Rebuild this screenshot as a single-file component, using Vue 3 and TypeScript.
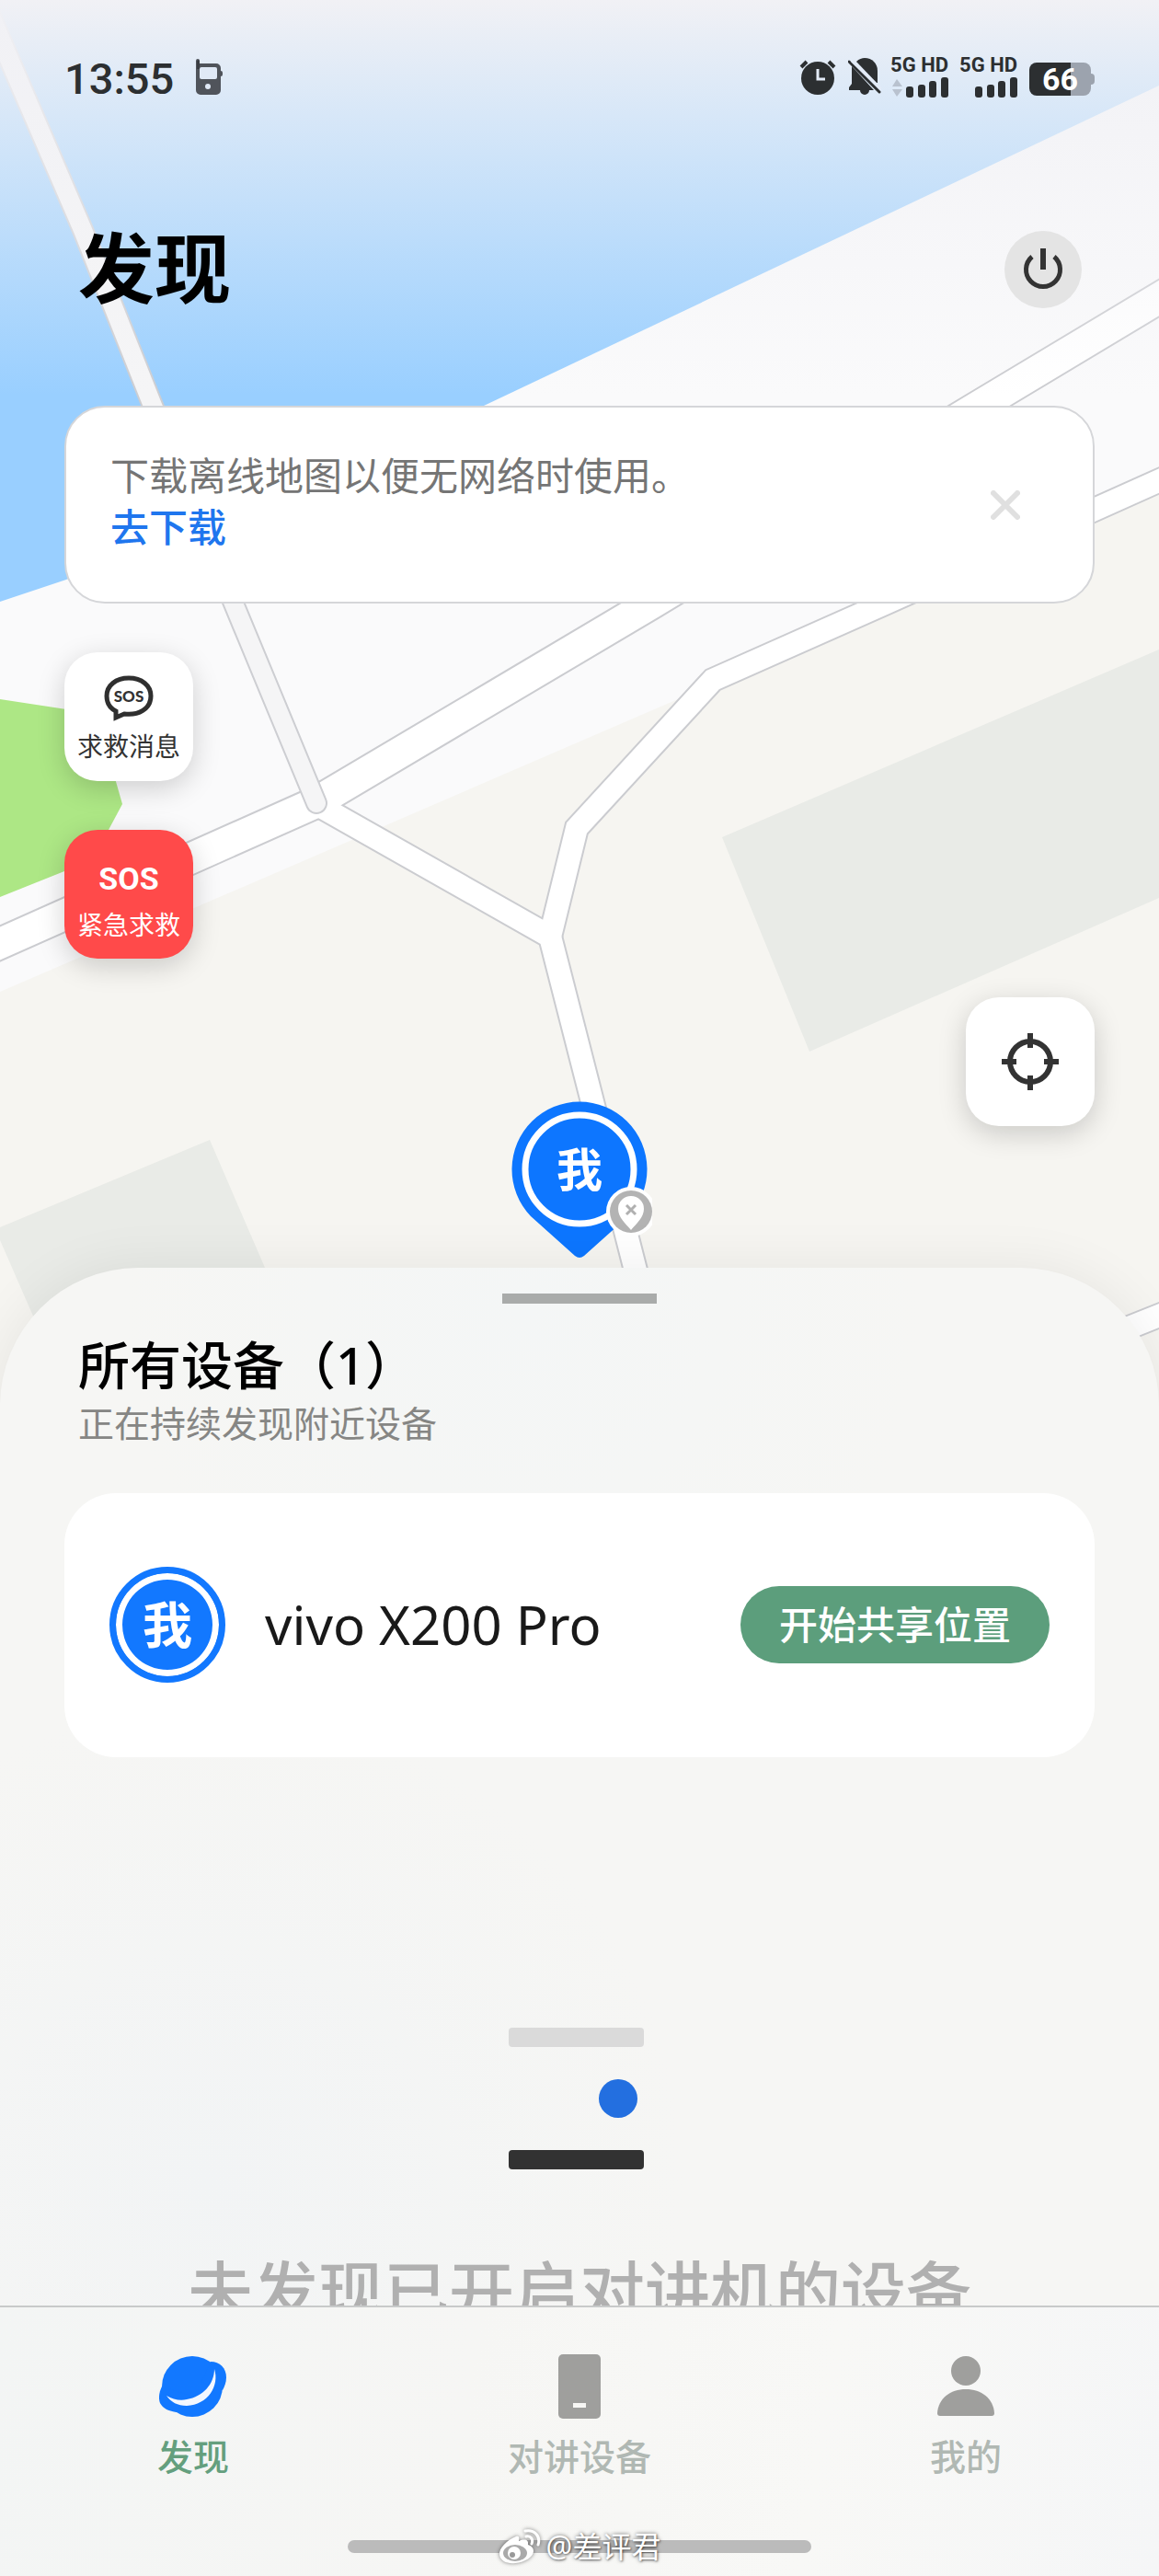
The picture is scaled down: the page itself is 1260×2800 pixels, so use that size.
<script setup lang="ts">
import { ref } from 'vue'

interface Device {
  id: number
  badge: string
  name: string
}

interface Tab {
  key: 'discover' | 'radio' | 'mine'
  label: string
}

const devices: Device[] = [{ id: 1, badge: '我', name: 'vivo X200 Pro' }]

const tabs: Tab[] = [
  { key: 'discover', label: '发现' },
  { key: 'radio', label: '对讲设备' },
  { key: 'mine', label: '我的' },
]

const active = ref<Tab['key']>('discover')
</script>

<template>
  <div class="app">
    <svg class="map" viewBox="0 0 1260 1560" preserveAspectRatio="xMidYMin slice" aria-hidden="true">
      <defs>
        <linearGradient id="haze" x1="0" y1="0" x2="0" y2="1">
          <stop offset="0" stop-color="#f1f1f5" />
          <stop offset="1" stop-color="#f1f1f5" stop-opacity="0" />
        </linearGradient>
      </defs>
      <rect width="1260" height="1560" fill="#fafafb" />
      <path d="M0 1078L760 750L962 656L1260 525V1560H0Z" fill="#f6f5f1" />
      <path d="M0 0H1260V93L526 441L72 630L0 654Z" fill="#99cfff" />
      <path d="M0 760L105 776L133 874L118 902L70 947L0 975Z" fill="#ade785" />
      <path d="M785 910L1260 706V976L880 1143Z" fill="#e9ebe7" />
      <path d="M0 1334L228 1239L330 1475L62 1490L0 1348Z" fill="#e9ebe7" />
      <g fill="none" stroke-linejoin="miter">
        <g stroke="#cbccd0">
          <path d="M-10 1030L342 873L708 656L1065 441L1270 318" stroke-width="37" />
          <path d="M342 873L598 1018L690 1377L700 1416" stroke-width="28" />
          <path d="M598 1018L627 900L775 739L962 656L1270 518" stroke-width="28" />
          <path d="M1200 1454L1270 1426" stroke-width="28" />
        </g>
        <g stroke="#ffffff">
          <path d="M-10 1030L342 873L708 656L1065 441L1270 318" stroke-width="33" />
          <path d="M342 873L598 1018L690 1377L700 1416" stroke-width="24" />
          <path d="M598 1018L627 900L775 739L962 656L1270 518" stroke-width="24" />
          <path d="M1200 1454L1270 1426" stroke-width="24" />
        </g>
        <path d="M-20 -5L9 62L90 250L166 441L254 656L344 873" stroke="#cdced2" stroke-width="24" stroke-linecap="round" />
        <path d="M-20 -5L9 62L90 250L166 441L254 656L344 873" stroke="#f5f5f6" stroke-width="20" stroke-linecap="round" />
      </g>
      <rect width="1260" height="430" fill="url(#haze)" />
    </svg>

    <section class="hero">
      <div class="status">
        <div class="status-side">
          <span class="clock">13:55</span>
          <svg class="radio-icon" width="30" height="40" viewBox="0 0 30 40" aria-hidden="true">
            <path d="M0 2a2 2 0 0 1 4 0v3h18a5 5 0 0 1 5 5v3a2 2 0 0 1 2 2v2a2 2 0 0 1-2 2v15a5 5 0 0 1-5 5H5a5 5 0 0 1-5-5Z" fill="#50545b" />
            <rect x="4" y="9" width="19" height="13" rx="2" fill="#e0e9f6" />
            <circle cx="13" cy="30" r="3" fill="#e0e9f6" />
            <path d="M1 2a2 2 0 0 1 3 0v9H1Z" fill="#3a3d42" />
          </svg>
        </div>
        <div class="status-side right">
          <svg class="alarm" width="40" height="40" viewBox="0 0 40 40" aria-hidden="true">
            <circle cx="20" cy="21" r="18" fill="#2c2f31" />
            <path d="M2 9L8 3M38 9L32 3" stroke="#2c2f31" stroke-width="4" />
            <path d="M20 11V22H28" fill="none" stroke="#e3ebf7" stroke-width="3" />
          </svg>
          <svg class="bell" width="36" height="42" viewBox="0 0 36 42" aria-hidden="true">
            <path d="M9 4C12 1 15 0 18 0C26 0 32 6 32 14V27L31 27Z" fill="#2c2f31" />
            <path d="M4 9L28 35H23A5 5 0 0 1 13 35H1V32L4 28Z" fill="#2c2f31" />
            <path d="M1 4L34 37" stroke="#2c2f31" stroke-width="3" stroke-linecap="round" />
            <path d="M4 3L36 34" stroke="#e3ebf7" stroke-width="3" />
          </svg>
          <div class="sim">
            <span>5G HD</span>
            <svg width="62" height="22" viewBox="0 0 62 22" aria-hidden="true">
              <path d="M1 10L6 2L12 10ZM1 13H12L6 21Z" fill="#b9c2cf" />
              <g fill="#2c2f31">
                <rect x="16" y="10" width="8" height="12" rx="3" />
                <rect x="29" y="8" width="8" height="14" rx="3" />
                <rect x="41" y="4" width="8" height="18" rx="3" />
                <rect x="54" y="0" width="8" height="22" rx="3" />
              </g>
            </svg>
          </div>
          <div class="sim">
            <span>5G HD</span>
            <svg width="62" height="22" viewBox="0 0 62 22" aria-hidden="true">
              <g fill="#2c2f31">
                <rect x="16" y="10" width="8" height="12" rx="3" />
                <rect x="29" y="8" width="8" height="14" rx="3" />
                <rect x="41" y="4" width="8" height="18" rx="3" />
                <rect x="54" y="0" width="8" height="22" rx="3" />
              </g>
            </svg>
          </div>
          <div class="battery"><span>66</span></div>
        </div>
      </div>

      <header class="heading">
        <h1>发现</h1>
        <button class="power" type="button" aria-label="关闭">
          <svg width="46" height="46" viewBox="0 0 46 46" aria-hidden="true">
            <path d="M11 9A18.500 18.500 0 1 0 35 9" fill="none" stroke="#333" stroke-width="5" />
            <path d="M23 0V23" stroke="#333" stroke-width="6" />
          </svg>
        </button>
      </header>

      <div class="banner">
        <p>下载离线地图以便无网络时使用。<br /><a href="#download">去下载</a></p>
        <button class="close" type="button" aria-label="关闭提示">
          <svg width="32" height="32" viewBox="0 0 32 32" aria-hidden="true">
            <path d="M3 3L29 29M29 3L3 29" stroke="#e0e0e0" stroke-width="6" stroke-linecap="round" />
          </svg>
        </button>
      </div>

      <div class="tools">
        <button class="tile" type="button">
          <span class="bubble">
            <svg width="54" height="50" viewBox="0 0 54 50" aria-hidden="true">
              <path d="M27 3C13 3 3 11 3 22.500C3 30 7 36 13 39V46L22 42C37 44 51 37 51 22.500C51 11 41 3 27 3Z" fill="none" stroke="#2f2f2f" stroke-width="5" />
            </svg>
            <b>SOS</b>
          </span>
          <span class="tile-label">求救消息</span>
        </button>
        <button class="tile danger" type="button">
          <b class="sos">SOS</b>
          <span class="tile-label">紧急求救</span>
        </button>
      </div>

      <button class="tile locate" type="button" aria-label="定位">
        <svg width="62" height="62" viewBox="0 0 62 62" aria-hidden="true">
          <circle cx="31" cy="31" r="22" fill="none" stroke="#333" stroke-width="6" />
          <path d="M31 0V16M31 46V62M0 31H16M46 31H62" stroke="#333" stroke-width="6" />
        </svg>
      </button>

      <div class="pin">
        <svg width="158" height="174" viewBox="0 0 158 174" aria-hidden="true">
          <path d="M26 126A73.500 73.500 0 1 1 132 126L84 169Q79 173 74 169Z" fill="#0d76ff" />
          <circle cx="79" cy="75" r="59" fill="none" stroke="#fff" stroke-width="7" />
          <circle cx="135" cy="121" r="27" fill="#fff" />
          <circle cx="135" cy="121" r="23" fill="#b3b3b3" />
          <path d="M135 141C129 134 121 127 121 118A14 14 0 0 1 149 118C149 127 141 134 135 141Z" fill="#fff" />
          <path d="M130 114L140 124M140 114L130 124" stroke="#b0b0b0" stroke-width="3" />
        </svg>
        <span>我</span>
      </div>
    </section>

    <main class="sheet">
      <div class="handle"></div>
      <h2>所有设备（1）</h2>
      <p class="hint">正在持续发现附近设备</p>
      <article v-for="device in devices" :key="device.id" class="device">
        <span class="avatar">{{ device.badge }}</span>
        <span class="device-name">{{ device.name }}</span>
        <button class="share" type="button">开始共享位置</button>
      </article>
      <div class="empty">
        <div class="loader">
          <i class="bar"></i>
          <i class="dot"></i>
          <i class="bar dark"></i>
        </div>
        <p>未发现已开启对讲机的设备</p>
      </div>
    </main>

    <footer class="dock">
      <nav>
        <button
          v-for="tab in tabs"
          :key="tab.key"
          type="button"
          :class="['tab', { active: tab.key === active }]"
          @click="active = tab.key"
        >
          <svg v-if="tab.key === 'discover'" width="74" height="70" viewBox="0 0 74 70" aria-hidden="true">
            <g fill="#1278ff">
              <circle cx="36" cy="35" r="33" />
              <path d="M56 8C66 8 73 15 73 25C73 31 71 35 69 39L46 30Z" />
              <path d="M3 35C0 41 -1 48 1 53C4 59 11 62 19 63L34 45Z" />
            </g>
            <path d="M60 16C66 34 53 55 30 56C20 56 13 52 8 45C15 49 23 51 30 49C48 46 60 32 60 16Z" fill="#f2f7ff" />
          </svg>
          <svg v-else-if="tab.key === 'radio'" width="74" height="70" viewBox="0 0 74 70" aria-hidden="true">
            <rect x="14" y="0" width="46" height="70" rx="5" fill="#9f9f9d" />
            <rect x="30" y="53" width="14" height="5" fill="#f7f7f5" />
          </svg>
          <svg v-else width="74" height="70" viewBox="0 0 74 70" aria-hidden="true">
            <circle cx="37" cy="18" r="16" fill="#9f9f9d" />
            <path d="M6 64C7 48 20 38 37 38C54 38 67 48 68 64Q68 67 65 67H9Q6 67 6 64Z" fill="#9f9f9d" />
          </svg>
          <span>{{ tab.label }}</span>
        </button>
      </nav>
      <div class="home-bar">
        <div class="credit">
          <svg width="46" height="38" viewBox="0 0 46 38" aria-hidden="true">
            <path d="M19 8C9 12 0 21 1 28C2 35 10 38 18 37C29 36 38 30 38 24C38 20 35 18 32 17C33 12 29 10 22 13C23 9 22 7 19 8Z" fill="#fff" />
            <ellipse cx="18" cy="26" rx="13" ry="9" fill="#aaa" />
            <circle cx="17" cy="26" r="7" fill="#fff" />
            <circle cx="15" cy="28" r="3" fill="#999" />
            <path d="M30 8C35 7 38 11 36 16M29 2C39 0 46 8 43 17" fill="none" stroke="#fff" stroke-width="3" stroke-linecap="round" />
          </svg>
          <span>@差评君</span>
        </div>
      </div>
    </footer>
  </div>
</template>

<style>
body {
  margin: 0;
}
</style>

<style scoped>
.app {
  position: relative;
  display: flex;
  flex-direction: column;
  height: 100vh;
  overflow: hidden;
  background: #f6f5f1;
  font-family: 'Noto Sans', 'Noto Sans CJK SC', sans-serif;
}

h1,
h2,
p {
  margin: 0;
}

button {
  padding: 0;
  border: 0;
  font-family: inherit;
  cursor: pointer;
}

svg {
  display: block;
  flex: none;
}

.map {
  position: absolute;
  top: 0;
  left: 0;
  width: 100%;
  height: 1560px;
}

.hero {
  position: relative;
  flex: none;
  display: flex;
  flex-direction: column;
  padding-bottom: 154px;
}

.status {
  display: flex;
  justify-content: space-between;
  padding: 62px 70px 0;
}

.status-side {
  display: flex;
  align-items: center;
  height: 44px;
  color: #2c2f31;
  font-family: Roboto, sans-serif;
}

.clock {
  font-size: 47px;
  font-weight: 500;
  line-height: 44px;
  padding-top: 4px;
}

.radio-icon {
  margin-left: 24px;
}

.bell {
  margin: 0 11px 0 13px;
}

.sim {
  display: flex;
  flex-direction: column;
  align-items: flex-end;
  gap: 4px;
  width: 62px;
  margin-right: 13px;
  font-size: 22px;
  font-weight: 700;
  line-height: 18px;
  white-space: nowrap;
}

.battery {
  position: relative;
  width: 67px;
  height: 36px;
  margin: 4px 4px 0 0;
  border-radius: 8px;
  background: linear-gradient(90deg, #2c2f31 67%, #9ca3ae 67%);
  color: #fff;
  font-size: 34px;
  font-weight: 700;
  line-height: 37px;
  text-align: center;
}

.battery::after {
  content: '';
  position: absolute;
  top: 12px;
  right: -4px;
  width: 4px;
  height: 12px;
  border-radius: 0 4px 4px 0;
  background: #9ca3ae;
}

.heading {
  display: flex;
  align-items: center;
  justify-content: space-between;
  margin-top: 145px;
  padding: 0 84px 0 85px;
}

h1 {
  padding-bottom: 4px;
  color: #000;
  font-size: 83px;
  font-weight: 700;
  line-height: 80px;
}

.power {
  display: flex;
  align-items: center;
  justify-content: center;
  width: 84px;
  height: 84px;
  border-radius: 50%;
  background: #e4e4e4;
}

.banner {
  display: flex;
  align-items: flex-start;
  justify-content: space-between;
  margin: 106px 70px 0;
  padding: 46px 65px 53px 48px;
  border: 2px solid #d5d6d9;
  border-radius: 44px;
  background: #fff;
  color: #757575;
  font-size: 42px;
  line-height: 56px;
}

.banner a {
  color: #1f76ee;
  font-weight: 500;
  text-decoration: none;
}

.close {
  align-self: flex-end;
  padding: 24px 14px 36px;
  background: none;
}

.tools {
  display: flex;
  flex-direction: column;
  gap: 53px;
  margin: 53px 70px 42px;
}

.tile {
  display: flex;
  flex-direction: column;
  align-items: center;
  width: 140px;
  height: 140px;
  border-radius: 36px;
  background: #fff;
  box-shadow: 0 8px 30px rgba(0, 0, 0, 0.18);
  color: #333;
}

.bubble {
  position: relative;
  margin-top: 25px;
}

.bubble b {
  position: absolute;
  inset: 0;
  font-family: Lato, sans-serif;
  font-size: 17px;
  font-weight: 900;
  line-height: 46px;
  text-align: center;
}

.tile-label {
  margin-top: 9px;
  font-size: 28px;
  line-height: 36px;
}

.danger {
  background: #ff4a4a;
  color: #fff;
}

.sos {
  margin-top: 30px;
  font-family: Roboto, sans-serif;
  font-size: 34px;
  line-height: 46px;
}

.locate {
  align-self: flex-end;
  justify-content: center;
  margin-right: 70px;
}

.pin {
  position: absolute;
  bottom: 8px;
  left: 50%;
  width: 158px;
  margin-left: -79px;
}

.pin span {
  position: absolute;
  top: 0;
  left: 0;
  width: 158px;
  color: #fff;
  font-size: 50px;
  font-weight: 700;
  line-height: 150px;
  text-align: center;
}

.sheet {
  position: relative;
  flex: 1;
  display: flex;
  flex-direction: column;
  min-height: 0;
  box-sizing: border-box;
  padding: 28px 70px 0;
  overflow: hidden;
  border-radius: 150px 150px 0 0;
  background:
    radial-gradient(circle at 45% 4%, #f4f6f6, transparent 34%),
    radial-gradient(circle at 18% 88%, #f2f4f5, transparent 36%),
    #f6f6f4;
  box-shadow: 0 0 60px rgba(0, 0, 0, 0.07);
}

.handle {
  flex: none;
  align-self: center;
  width: 168px;
  height: 11px;
  background: #a9abaa;
}

h2 {
  margin: 34px 0 0 15px;
  color: #000;
  font-size: 56px;
  font-weight: 500;
  line-height: 64px;
}

.hint {
  margin: 8px 0 0 15px;
  color: #868684;
  font-size: 39px;
  line-height: 48px;
}

.device {
  display: flex;
  align-items: center;
  margin-top: 52px;
  padding: 80px 49px 81px;
  border-radius: 56px;
  background: #fff;
}

.avatar {
  box-sizing: border-box;
  width: 126px;
  height: 126px;
  border: 7px solid #1278ff;
  border-radius: 50%;
  background: #1278ff;
  box-shadow: inset 0 0 0 7px #fff;
  color: #fff;
  font-size: 54px;
  font-weight: 700;
  line-height: 112px;
  text-align: center;
}

.device-name {
  flex: 1;
  margin-left: 43px;
  color: #191919;
  font-size: 58px;
  line-height: 72px;
}

.share {
  height: 84px;
  padding: 0 42px;
  border-radius: 42px;
  background: #5c9e7c;
  color: #fff;
  font-size: 42px;
  font-weight: 500;
  line-height: 84px;
}

.empty {
  display: flex;
  flex-direction: column;
  align-items: center;
  margin-top: 294px;
}

.empty p {
  margin-top: 90px;
  color: #b0b0b0;
  font-size: 71px;
  font-weight: 500;
  line-height: 84px;
  white-space: nowrap;
}

.loader {
  display: flex;
  flex-direction: column;
  gap: 35px;
  width: 147px;
  margin-right: 7px;
}

.bar {
  height: 21px;
  border-radius: 4px;
  background: #dadada;
}

.bar.dark {
  background: #323232;
}

.dot {
  width: 42px;
  height: 42px;
  margin-left: 98px;
  border-radius: 50%;
  background: #236fe0;
}

.dock {
  position: relative;
  flex: none;
  padding: 51px 0 25px;
  border-top: 2px solid #c8caca;
  background: linear-gradient(100deg, #f3f5f4, #f6f6f4 40%, #f8f8f6 70%, #f5f6f7);
}

nav {
  display: flex;
}

.tab {
  flex: 1;
  display: flex;
  flex-direction: column;
  align-items: center;
  gap: 17px;
  background: none;
  color: #b0b8b3;
  font-size: 39px;
  font-weight: 500;
  line-height: 48px;
}

.tab.active {
  color: #649f7e;
}

.home-bar {
  position: relative;
  width: 40%;
  height: 14px;
  margin: 67px auto 0;
  border-radius: 7px;
  background: #bbb;
}

.credit {
  position: absolute;
  inset: -13px 0;
  display: flex;
  align-items: center;
  justify-content: center;
  gap: 6px;
  color: #fff;
  font-size: 32px;
  line-height: 40px;
  text-shadow: 0 0 4px rgba(0, 0, 0, 0.6), 1px 1px 2px rgba(0, 0, 0, 0.4);
}

.credit svg {
  filter: drop-shadow(0 0 2px rgba(0, 0, 0, 0.5));
}
</style>
